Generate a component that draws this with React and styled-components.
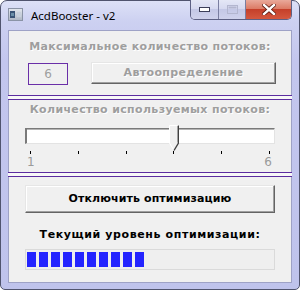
import React from "react";
import styled, { createGlobalStyle } from "styled-components";

const Global = createGlobalStyle`
  html, body { margin: 0; padding: 0; background: #fff; }
  * { box-sizing: border-box; }
`;

const Window = styled.div`
  width: 300px;
  height: 290px;
  border: 1px solid #50546e;
  border-radius: 7px 7px 5px 5px;
  background: linear-gradient(180deg, #dde1f7 0px, #cdd1f1 20px, #c3c6ee 60px, #bfc3ec 100%);
  padding: 0 7px 6px 7px;
  display: flex;
  flex-direction: column;
  font-family: "DejaVu Sans", sans-serif;
`;

const TitleBar = styled.div`
  height: 29px;
  display: flex;
  align-items: flex-start;
`;

const AppIcon = styled.svg`
  margin-top: 7px;
  flex: none;
`;

const Title = styled.div`
  margin-top: 6px;
  margin-left: 8px;
  font-family: "Noto Sans", sans-serif;
  font-size: 11.5px;
  line-height: 18px;
  color: #000;
`;

const Caption = styled.div`
  margin-left: auto;
  margin-top: -1px;
  display: flex;
  border: 1px solid #5d6184;
  border-top: none;
  border-radius: 0 0 5px 5px;
  overflow: hidden;
`;

const CapBtn = styled.div`
  width: ${(p) => p.$w}px;
  height: 19px;
  display: flex;
  align-items: center;
  justify-content: center;
  border-left: ${(p) => (p.$first ? "none" : "1px solid #7a7ea0")};
  background: ${(p) =>
    p.$close
      ? "linear-gradient(180deg, #e9a99a 0%, #dc7c66 45%, #c5402a 50%, #d4583f 100%)"
      : "linear-gradient(180deg, #e4e7f6 0%, #d6d9f0 45%, #c4c8e6 50%, #cfd2ec 100%)"};
`;

const Client = styled.div`
  flex: 1;
  background: #f0f0f0;
  border: 1px solid #9ea2c6;
  display: flex;
  flex-direction: column;
`;

const Section = styled.div`
  display: flex;
  flex-direction: column;
  align-items: center;
  padding: ${(p) => p.$pad};
`;

const Label = styled.div`
  font-family: "DejaVu Sans", sans-serif;
  font-weight: bold;
  font-size: 11px;
  line-height: 14px;
  letter-spacing: ${(p) => p.$ls || 0}px;
  margin-top: ${(p) => p.$mt || 0}px;
  color: ${(p) => (p.$disabled ? "#9e9e9e" : "#000")};
  text-shadow: ${(p) => (p.$disabled ? "1px 1px 0 #ffffff" : "none")};
  white-space: nowrap;
`;

const Divider = styled.div`
  height: 5px;
  margin: 0 -1px;
  border-top: 1px solid #5b2c9f;
  border-bottom: 1px solid #5b2c9f;
  background: #f7f7f7;
  flex: none;
`;

const Row = styled.div`
  align-self: stretch;
  display: flex;
  align-items: flex-start;
  margin-top: 8px;
  padding-left: 19px;
  gap: 23px;
`;

const CountBox = styled.div`
  width: 40px;
  height: 22px;
  margin-top: 1px;
  border: 1px solid #6a2fa8;
  display: flex;
  align-items: center;
  justify-content: center;
  font-family: "DejaVu Sans", sans-serif;
  font-size: 12px;
  color: #9e9e9e;
`;

const Button = styled.div`
  width: ${(p) => p.$w}px;
  height: ${(p) => p.$h}px;
  background: #f0f0f0;
  border: 1px solid;
  border-color: #e6e6e6 #646464 #646464 #e6e6e6;
  box-shadow: inset -1px -1px 0 #a0a0a0, inset 1px 1px 0 #ffffff;
  display: flex;
  align-items: center;
  justify-content: center;
`;

const Slider = styled.div`
  position: relative;
  width: 250px;
  margin-top: 8px;
`;

const Track = styled.div`
  height: 16px;
  margin-top: 3px;
  background: #ffffff;
  border-style: solid;
  border-width: 1px 1px 1px 2px;
  border-color: #7a7a7a #e3e3e3 #e3e3e3 #7a7a7a;
  box-shadow: inset 0 1px 0 #b4b4b4;
`;

const Thumb = styled.svg`
  position: absolute;
  left: 144px;
  top: 0;
`;

const Ticks = styled.div`
  display: flex;
  justify-content: space-between;
  padding: 0 5px 0 5px;
  margin-top: 7px;
`;

const Tick = styled.div`
  width: 1px;
  height: 3px;
  background: #000;
`;

const Nums = styled.div`
  display: flex;
  justify-content: space-between;
  padding: 0 3px 0 2px;
  margin-top: 2px;
  font-family: "DejaVu Sans", sans-serif;
  font-size: 12px;
  line-height: 13px;
  color: #9a9a9a;
`;

const Progress = styled.div`
  width: 250px;
  height: 21px;
  margin-top: 7px;
  border: 1px solid #dadada;
  background: #efefef;
  display: flex;
  gap: 3px;
  padding: 2px 1px;
`;

const Block = styled.div`
  width: 9px;
  height: 15px;
  background: #2424ff;
`;

export default function App() {
  const ticks = [0, 1, 2, 3, 4, 5];
  const blocks = Array.from({ length: 10 });
  return (
    <>
      <Global />
      <Window>
        <TitleBar>
          <AppIcon width="15" height="13" viewBox="0 0 15 13">
            <defs>
              <linearGradient id="ig" x1="0" y1="0" x2="0" y2="1">
                <stop offset="0" stopColor="#e4e8ef" />
                <stop offset="1" stopColor="#aeb6c4" />
              </linearGradient>
            </defs>
            <rect x="0.5" y="0.5" width="14" height="12" fill="url(#ig)" stroke="#8a93a6" />
            <rect x="2" y="3" width="5" height="7" fill="#3a5476" />
            <rect x="3" y="5" width="3" height="3" fill="#6b8fa8" />
            <rect x="9" y="4" width="4" height="5" fill="#c8d0dc" />
          </AppIcon>
          <Title>AcdBooster - v2</Title>
          <Caption>
            <CapBtn $w={27} $first>
              <svg width="11" height="5" viewBox="0 0 11 5">
                <rect x="0.5" y="0.5" width="10" height="4" fill="#fff" stroke="#3c3f5a" />
              </svg>
            </CapBtn>
            <CapBtn $w={27}>
              <svg width="11" height="9" viewBox="0 0 11 9">
                <rect x="0.5" y="0.5" width="10" height="8" fill="none" stroke="#b3b6cf" />
                <rect x="1.5" y="1.5" width="8" height="2" fill="#b3b6cf" />
              </svg>
            </CapBtn>
            <CapBtn $w={46} $close>
              <svg width="14" height="11" viewBox="0 0 14 11">
                <path d="M2 1 L12 10 M12 1 L2 10" stroke="#5a1a10" strokeWidth="4" strokeLinecap="square" />
                <path d="M2 1 L12 10 M12 1 L2 10" stroke="#ffffff" strokeWidth="2.4" strokeLinecap="square" />
              </svg>
            </CapBtn>
          </Caption>
        </TitleBar>
        <Client>
          <Section $pad="9px 0 10px">
            <Label $disabled $ls={0.35}>Максимальное количество потоков:</Label>
            <Row>
              <CountBox>6</CountBox>
              <Button $w={185} $h={22}>
                <Label $disabled $ls={0.35}>Автоопределение</Label>
              </Button>
            </Row>
          </Section>
          <Divider />
          <Section $pad="3px 0 3px">
            <Label $disabled $ls={0.35}>Количество используемых потоков:</Label>
            <Slider>
              <Track />
              <Thumb width="10" height="26" viewBox="0 0 10 26">
                <path d="M0.5 0.5 H9.5 V18 L5 25.5 L0.5 18 Z" fill="#f0f0f0" stroke="#ffffff" />
                <path d="M9.5 0.5 V18 L5 25.5" fill="none" stroke="#404040" strokeWidth="1.4" />
                <path d="M8.5 1 V17.5" stroke="#a0a0a0" />
              </Thumb>
              <Ticks>
                {ticks.map((t) => (
                  <Tick key={t} />
                ))}
              </Ticks>
              <Nums>
                <span>1</span>
                <span>6</span>
              </Nums>
            </Slider>
          </Section>
          <Divider />
          <Section $pad="8px 0 0">
            <Button $w={250} $h={28}>
              <Label $ls={0.1}>Отключить оптимизацию</Label>
            </Button>
            <Label $ls={0.6} $mt={15}>Текущий уровень оптимизации:</Label>
            <Progress>
              {blocks.map((_, i) => (
                <Block key={i} />
              ))}
            </Progress>
          </Section>
        </Client>
      </Window>
    </>
  );
}
